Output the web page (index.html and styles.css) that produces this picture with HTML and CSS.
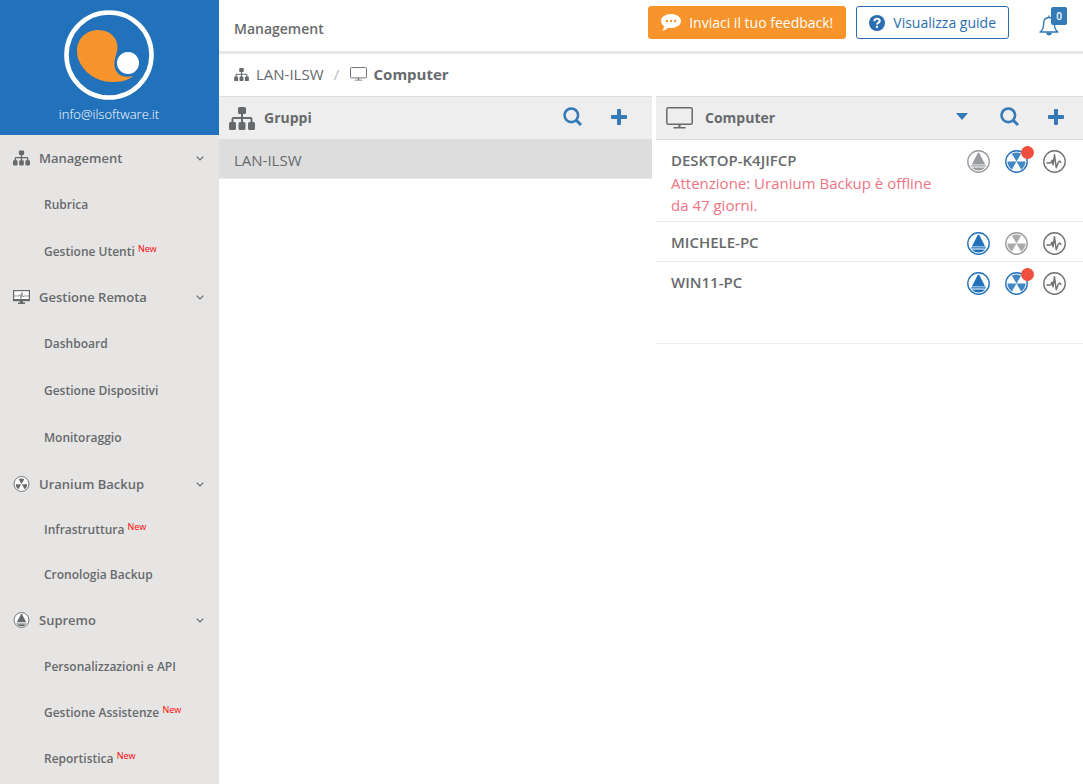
FILE: index.html
```html
<!DOCTYPE html>
<html lang="it">
<head>
<meta charset="utf-8">
<meta name="viewport" content="width=device-width, initial-scale=1">
<title>Management - Computer</title>
<link rel="stylesheet" href="styles.css">
</head>
<body>
<svg class="sprite" aria-hidden="true">
  <symbol id="sitemap" viewBox="0 0 26 23"><path fill="currentColor" d="M10.500 0h5q1.500 0 1.500 1.500v4q0 1.500-1.500 1.500h-1.500v3h7.500q2 0 2 2v3h1q1.500 0 1.500 1.500v5q0 1.500-1.500 1.500h-4q-1.500 0-1.500-1.500v-5q0-1.500 1.500-1.500h1v-3h-7.500v3h1q1.500 0 1.500 1.500v5q0 1.500-1.500 1.500h-4q-1.500 0-1.500-1.500v-5q0-1.500 1.500-1.500h1v-3h-7.500v3h1q1.500 0 1.500 1.500v5q0 1.500-1.500 1.500h-4q-1.500 0-1.500-1.500v-5q0-1.500 1.500-1.500h1v-3q0-2 2-2h7.500v-3h-1.500q-1.500 0-1.500-1.500v-4q0-1.500 1.500-1.500z"/></symbol>
  <symbol id="monitor" viewBox="0 0 27 22"><rect x=".8" y=".8" width="25.400" height="16.400" rx="1.500" fill="none" stroke="currentColor" stroke-width="1.500"/><path d="M12.500 17h2v3h5V21.500h-12v-1.500h5z" fill="currentColor"/></symbol>
  <symbol id="remote" viewBox="0 0 17 14"><rect x=".6" y=".6" width="15.800" height="10" fill="#fff" stroke="currentColor" stroke-width="1.200"/><path d="M1 9h15v2H1zM7 11h3v1.500h2V14H5v-1.500h2z" fill="currentColor"/><path d="M1 6h5l1-1.500L8 8.500l1-6 1 4.500 1-1h5" fill="none" stroke="currentColor" stroke-width=".7"/></symbol>
  <symbol id="uranium" viewBox="0 0 24 24"><circle cx="12" cy="12" r="11.200" fill="#fff" stroke="currentColor" stroke-width="1.400"/><path class="blades" d="M12 12 7.200 3.800Q12 1.600 16.800 3.800ZM12 12H2.500Q3 17.500 7.200 20.300ZM12 12h9.500Q21 17.500 16.800 20.300Z" fill="currentColor"/></symbol>
  <symbol id="trefoil" viewBox="0 0 24 24"><circle cx="12" cy="12" r="11.200" fill="#fff" stroke="currentColor" stroke-width="1.400"/><path d="M12 12 7.700 4.700Q12 3 16.300 4.700ZM11.300 12.500 7.500 19.700Q3.500 18 3.500 12.500ZM12.700 12.500l3.800 7.200Q20.500 18 20.500 12.500Z" fill="currentColor"/></symbol>
  <symbol id="supremo" viewBox="0 0 24 24"><circle cx="12" cy="12" r="11.200" fill="#fff" stroke="currentColor" stroke-width="1.400"/><path d="M12 2.700Q13 3 14 5.500L19 15H5L10 5.500Q11 3 12 2.700ZM4.300 16h15.400v1.300H4.300zM5 18.200h14Q16 21.500 12 21.500T5 18.200Z" fill="currentColor"/></symbol>
  <symbol id="pulse" viewBox="0 0 24 24"><circle cx="12" cy="12" r="11.200" fill="#fff" stroke="currentColor" stroke-width="1.400"/><path d="M3.500 13.500H8l1.500-3 1 5 1.500-10.500 1.800 13.500 2.200-6 1.500-1 1.500 2" fill="none" stroke="currentColor" stroke-width="1.500" stroke-linejoin="round"/></symbol>
  <symbol id="search" viewBox="0 0 20 20"><circle cx="8.300" cy="8.300" r="6.800" fill="none" stroke="currentColor" stroke-width="2.600"/><path d="m13 13 5 5" stroke="currentColor" stroke-width="3"/></symbol>
  <symbol id="plus" viewBox="0 0 16 16"><path d="M7 0h2q1 0 1 1v5h5q1 0 1 1v2q0 1-1 1h-5v5q0 1-1 1H7q-1 0-1-1v-5H1q-1 0-1-1V7q0-1 1-1h5V1q0-1 1-1z" fill="currentColor"/></symbol>
  <symbol id="chevron" viewBox="0 0 8 5"><path d="m.7.700 3.300 3.300L7.300.700" fill="none" stroke="currentColor" stroke-width="1.200"/></symbol>
</svg>
<div class="app">
  <aside class="sidebar">
    <div class="brand">
      <svg class="logo" viewBox="0 0 90 90" role="img" aria-label="Logo"><circle cx="45" cy="45" r="42.500" fill="none" stroke="#fff" stroke-width="4.600"/><path d="M34 20C47 20 54 29 53.500 38C53 44 50 48 50.500 55C51 63 57 69 69 66C64 71 56 72 47 72C31 72 13 58 13 41C13 29 22 20 34 20Z" fill="#f7942b"/><circle cx="64" cy="53" r="11" fill="#fff"/></svg>
      <span>info@ilsoftware.it</span>
    </div>
    <nav>
      <section class="group">
        <button class="heading" type="button"><svg class="nav-icon"><use href="#sitemap"/></svg><span>Management</span><svg class="chevron"><use href="#chevron"/></svg></button>
        <a href="#">Rubrica</a>
        <a href="#">Gestione Utenti <em>New</em></a>
      </section>
      <section class="group">
        <button class="heading" type="button"><svg class="nav-icon"><use href="#remote"/></svg><span>Gestione Remota</span><svg class="chevron"><use href="#chevron"/></svg></button>
        <a href="#">Dashboard</a>
        <a href="#">Gestione Dispositivi</a>
        <a href="#">Monitoraggio</a>
      </section>
      <section class="group compact">
        <button class="heading" type="button"><svg class="nav-icon"><use href="#trefoil"/></svg><span>Uranium Backup</span><svg class="chevron"><use href="#chevron"/></svg></button>
        <a href="#">Infrastruttura <em>New</em></a>
        <a href="#">Cronologia Backup</a>
      </section>
      <section class="group last">
        <button class="heading" type="button"><svg class="nav-icon"><use href="#supremo"/></svg><span>Supremo</span><svg class="chevron"><use href="#chevron"/></svg></button>
        <a href="#">Personalizzazioni e API</a>
        <a href="#">Gestione Assistenze <em>New</em></a>
        <a href="#">Reportistica <em>New</em></a>
      </section>
    </nav>
  </aside>
  <main class="content">
    <header class="topbar">
      <h1>Management</h1>
      <button class="btn feedback" type="button"><svg viewBox="0 0 20 17"><path d="M10 0C15.500 0 20 3 20 7s-4.500 7-10 7q-1.500 0-3-.3Q4.500 16.500 1 16.800 3 15 3 12.200 0 10 0 7C0 3 4.500 0 10 0Z" fill="currentColor"/><g fill="#f7942b"><circle cx="6" cy="7" r="1.200"/><circle cx="10" cy="7" r="1.200"/><circle cx="14" cy="7" r="1.200"/></g></svg>Inviaci il tuo feedback!</button>
      <button class="btn guide" type="button"><svg viewBox="0 0 16 16"><circle cx="8" cy="8" r="8" fill="currentColor"/><path d="M5.400 6.200Q5.400 3.800 8 3.800T10.700 6.100Q10.700 7.200 9.300 7.900 8 8.500 8 9.600" fill="none" stroke="#fff" stroke-width="2.100"/><path d="M6.900 10.700h2.200v2.200H6.900z" fill="#fff"/></svg>Visualizza guide</button>
      <button class="bell" type="button" aria-label="Notifiche"><svg viewBox="0 0 20 21"><path d="M10 2.500c-4.500 0-5.500 3.500-5.500 7 0 4-1.200 6-3.500 7.500h18c-2.300-1.500-3.500-3.500-3.500-7.500 0-3.500-1-7-5.500-7ZM10 .5v2" fill="none" stroke="currentColor" stroke-width="1.400" stroke-linejoin="round"/><path d="M7 17.500h6q-.5 3-3 3t-3-3Z" fill="currentColor"/></svg><span class="badge">0</span></button>
    </header>
    <nav class="crumbs" aria-label="Percorso">
      <a href="#"><svg class="crumb-map"><use href="#sitemap"/></svg>LAN-ILSW</a>
      <span class="slash">/</span>
      <strong><svg class="crumb-pc"><use href="#monitor"/></svg>Computer</strong>
    </nav>
    <div class="panels">
      <section class="panel">
        <header class="panel-head"><svg class="head-map"><use href="#sitemap"/></svg><h2>Gruppi</h2>
          <div class="tools"><button type="button" aria-label="Cerca"><svg class="search"><use href="#search"/></svg></button><button type="button" aria-label="Aggiungi"><svg class="plus"><use href="#plus"/></svg></button></div>
        </header>
        <a class="selected" href="#">LAN-ILSW</a>
      </section>
      <section class="panel computers">
        <header class="panel-head"><svg class="head-pc"><use href="#monitor"/></svg><h2>Computer</h2>
          <div class="tools"><button class="filter" type="button" aria-label="Filtra"><svg class="caret" viewBox="0 0 12 7"><path d="M0 0h12L6 7z" fill="currentColor"/></svg></button><button type="button" aria-label="Cerca"><svg class="search"><use href="#search"/></svg></button><button type="button" aria-label="Aggiungi"><svg class="plus"><use href="#plus"/></svg></button></div>
        </header>
        <ul>
          <li><div class="device"><h3>DESKTOP-K4JIFCP</h3><p>Attenzione: Uranium Backup è offline da 47 giorni.</p></div>
            <div class="status"><button class="off" type="button" aria-label="Supremo"><svg><use href="#supremo"/></svg></button><button class="on alert" type="button" aria-label="Uranium Backup"><svg><use href="#uranium"/></svg></button><button type="button" aria-label="Monitoraggio"><svg><use href="#pulse"/></svg></button></div></li>
          <li><div class="device"><h3>MICHELE-PC</h3></div>
            <div class="status"><button class="on" type="button" aria-label="Supremo"><svg><use href="#supremo"/></svg></button><button class="off" type="button" aria-label="Uranium Backup"><svg><use href="#uranium"/></svg></button><button type="button" aria-label="Monitoraggio"><svg><use href="#pulse"/></svg></button></div></li>
          <li><div class="device"><h3>WIN11-PC</h3></div>
            <div class="status"><button class="on" type="button" aria-label="Supremo"><svg><use href="#supremo"/></svg></button><button class="on alert" type="button" aria-label="Uranium Backup"><svg><use href="#uranium"/></svg></button><button type="button" aria-label="Monitoraggio"><svg><use href="#pulse"/></svg></button></div></li>
        </ul>
      </section>
    </div>
  </main>
</div>
</body>
</html>
```
FILE: styles.css
```css
* { box-sizing: border-box; }
body { margin: 0; font: 14px/22px "Open Sans", sans-serif; color: #676a6c; background: #fff; }
h1, h2, h3, p, ul { margin: 0; padding: 0; }
ul { list-style: none; }
a { color: inherit; text-decoration: none; }
button { font: inherit; color: inherit; background: none; border: 0; padding: 0; margin: 0; cursor: pointer; }
svg { display: block; flex: none; }
.sprite { position: absolute; width: 0; height: 0; }

.app { display: flex; min-height: 100vh; }
.sidebar { width: 219px; flex: none; background: #e6e5e4; }
.content { flex: 1; min-width: 0; }

.brand { height: 135px; padding: 10px 1px 0 0; background: #2272bb; color: #fff; display: flex; flex-direction: column; align-items: center; font-size: 13px; font-weight: 300; line-height: 28px; }
.logo { width: 90px; height: 90px; }

.heading { display: flex; align-items: center; width: 100%; height: 46px; padding: 0 15px 0 13px; font-size: 13px; font-weight: 600; text-align: left; }
.heading span { flex: 1; }
.nav-icon { width: 17px; height: 16px; margin-right: 9px; }
.chevron { width: 8px; height: 5px; }
.group a { display: block; height: 47px; line-height: 47px; padding-left: 44px; font-size: 12px; font-weight: 600; }
.group:first-child a:last-child { height: 46px; }
.compact a { height: 45px; line-height: 45px; }
.last a { height: 46px; line-height: 48px; }
.group em { font-size: 9px; line-height: 1; font-style: normal; font-weight: 400; color: #f00; vertical-align: 4px; }

.topbar { display: flex; align-items: center; height: 54px; padding: 0 16px 0 15px; border-bottom: 3px solid #e7e7ea; }
.topbar h1 { flex: 1; font-size: 14px; font-weight: 600; padding-top: 6px; }
.btn { display: flex; align-items: center; gap: 8px; height: 33px; border-radius: 3px; border: 1px solid #2a6db0; padding: 0 12px; margin-bottom: 6px; }
.feedback { background: #f7942b; border-color: #f7942b; color: #fff; margin-right: 10px; }
.feedback svg { width: 20px; height: 17px; }
.guide { color: #2a6db0; }
.guide svg { width: 16px; height: 16px; }
.bell { position: relative; color: #337ab7; margin-left: 30px; padding-right: 8px; }
.bell svg { width: 20px; height: 21px; }
.badge { position: absolute; right: 0; top: -8px; width: 16px; height: 18px; border-radius: 2px; background: #337ab7; color: #fff; font-size: 10px; font-weight: 600; line-height: 18px; text-align: center; }

.crumbs { display: flex; align-items: center; height: 42px; padding: 0 0 2px 15px; font-size: 15px; }
.crumbs a, .crumbs strong { display: flex; align-items: center; }
.crumb-map { width: 15px; height: 13px; margin-right: 7px; }
.crumb-pc { width: 17px; height: 14px; margin-right: 7px; }
.slash { width: 26px; text-align: center; color: #bbb; }

.panels { display: grid; grid-template-columns: 433fr 427fr; gap: 4px; }
.panel-head { display: flex; align-items: center; height: 43px; background: #eee; border-top: 1px solid #ddd; padding: 0 25px 0 10px; }
.panel-head h2 { flex: 1; font-size: 14px; font-weight: 700; }
.head-map { width: 26px; height: 23px; margin-right: 9px; }
.head-pc { width: 27px; height: 22px; margin-right: 12px; }
.tools { display: flex; align-items: center; gap: 28px; color: #337ab7; padding-bottom: 3px; }
.search { width: 20px; height: 20px; }
.plus { width: 16px; height: 16px; }
.caret { width: 12px; height: 7px; }
.filter { margin-right: 4px; }
.computers .panel-head { height: 44px; border-bottom: 1px solid #ddd; padding-right: 19px; }
.selected { display: block; height: 40px; line-height: 42px; padding-left: 15px; background: #ddd; border-bottom: 1px solid #eaeaea; font-size: 15px; }

.computers li { display: flex; justify-content: space-between; min-height: 40px; padding: 9px 17px 5px 15px; border-bottom: 1px solid #eaeaea; }
.computers li:last-child { min-height: 82px; }
.device { max-width: 270px; font-size: 15px; }
.device h3 { font-size: 15px; font-weight: 600; }
.device p { margin-top: 1px; color: #ee7482; }
.status { display: flex; gap: 15px; height: 23px; margin-top: 1px; color: #717171; }
.status button { position: relative; height: 23px; }
.status svg { width: 23px; height: 23px; }
.status .on { color: #2272bb; }
.blades { opacity: .85; }
.status .off { color: #999b9e; }
.alert::after { content: ""; position: absolute; right: -6px; top: -4px; width: 13px; height: 13px; border-radius: 50%; background: #f04e3e; }
```
